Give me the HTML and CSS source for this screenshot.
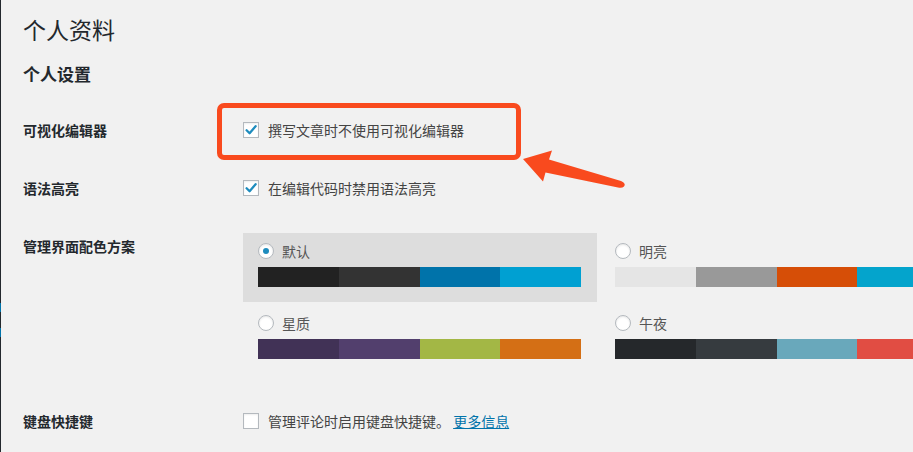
FILE: index.html
```html
<!DOCTYPE html>
<html lang="zh-CN">
<head>
<meta charset="utf-8">
<title>个人资料</title>
<link rel="stylesheet" href="styles.css">
</head>
<body>
<div class="page">
  <div class="sidebar-edge">
    <span class="edge-mark edge-a"></span>
    <span class="edge-mark edge-b"></span>
  </div>
  <div class="wrap">
    <h1 class="title">个人资料</h1>
    <h2 class="section">个人设置</h2>

    <div class="form">
      <div class="row row-1">
        <div class="th">可视化编辑器</div>
        <div class="td td-annotated">
          <label class="check-line">
            <span class="checkbox is-checked">
              <svg viewBox="0 0 16 16" width="16" height="16"><path d="M3.6 8.2 L6.6 11.2 L12.6 4.2" fill="none" stroke="#1e8cbe" stroke-width="2.3" stroke-linecap="round" stroke-linejoin="round"/></svg>
            </span>
            <span class="check-text">撰写文章时不使用可视化编辑器</span>
          </label>
          <div class="highlight-box"></div>
        </div>
      </div>

      <div class="row row-2">
        <div class="th">语法高亮</div>
        <div class="td">
          <label class="check-line">
            <span class="checkbox is-checked">
              <svg viewBox="0 0 16 16" width="16" height="16"><path d="M3.6 8.2 L6.6 11.2 L12.6 4.2" fill="none" stroke="#1e8cbe" stroke-width="2.3" stroke-linecap="round" stroke-linejoin="round"/></svg>
            </span>
            <span class="check-text">在编辑代码时禁用语法高亮</span>
          </label>
        </div>
      </div>

      <div class="row row-3">
        <div class="th">管理界面配色方案</div>
        <div class="td">
          <div class="schemes">
            <div class="scheme is-selected">
              <div class="scheme-head"><span class="radio is-on"></span><span class="scheme-name">默认</span></div>
              <div class="palette">
                <span style="background:#222222"></span>
                <span style="background:#333333"></span>
                <span style="background:#0073aa"></span>
                <span style="background:#00a0d2"></span>
              </div>
            </div>
            <div class="scheme">
              <div class="scheme-head"><span class="radio"></span><span class="scheme-name">明亮</span></div>
              <div class="palette">
                <span style="background:#e5e5e5"></span>
                <span style="background:#999999"></span>
                <span style="background:#d64e07"></span>
                <span style="background:#04a4cc"></span>
              </div>
            </div>
            <div class="scheme">
              <div class="scheme-head"><span class="radio"></span><span class="scheme-name">星质</span></div>
              <div class="palette">
                <span style="background:#413256"></span>
                <span style="background:#523f6d"></span>
                <span style="background:#a3b745"></span>
                <span style="background:#d46f15"></span>
              </div>
            </div>
            <div class="scheme">
              <div class="scheme-head"><span class="radio"></span><span class="scheme-name">午夜</span></div>
              <div class="palette">
                <span style="background:#25282b"></span>
                <span style="background:#363b3f"></span>
                <span style="background:#69a8bb"></span>
                <span style="background:#e14d43"></span>
              </div>
            </div>
          </div>
        </div>
      </div>

      <div class="row row-4">
        <div class="th">键盘快捷键</div>
        <div class="td">
          <label class="check-line">
            <span class="checkbox"></span>
            <span class="check-text">管理评论时启用键盘快捷键。 <a class="more" href="#">更多信息</a></span>
          </label>
        </div>
      </div>
    </div>
  </div>

  <svg class="arrow" width="913" height="452" viewBox="0 0 913 452">
    <path d="M523 159 L552 150.5 L549 159.5 L621 181 Q626.5 183.5 624 186.5 Q622 188.5 618 187.5 L545.5 172.5 L543 181.5 Z" fill="#f94a1e"/>
  </svg>
</div>
</body>
</html>
```

FILE: styles.css
```css
html, body {
  margin: 0;
  padding: 0;
  background: #f1f1f1;
  overflow: hidden;
}

body {
  font-family: "Noto Sans CJK SC", "Noto Sans", "Liberation Sans", sans-serif;
  color: #23282d;
  font-size: 14px;
  line-height: 20px;
}

.page {
  position: relative;
  width: 913px;
  height: 452px;
  display: flex;
}

.sidebar-edge {
  position: relative;
  width: 1px;
  flex: 0 0 1px;
  background: #23282d;
}

.edge-mark {
  position: absolute;
  left: 0;
  width: 1px;
  background: #0073aa;
}

.edge-a { top: 303px; height: 9px; }
.edge-b { top: 328px; height: 9px; }

.wrap {
  flex: 1;
  padding-left: 22px;
  min-width: 0;
}

.title {
  margin: 15px 0 0;
  font-size: 23px;
  line-height: 29px;
  font-weight: 400;
  color: #23282d;
}

.section {
  margin: 18px 0 0;
  font-size: 17px;
  line-height: 24px;
  font-weight: 600;
  color: #23282d;
}

.form {
  margin-top: 24px;
}

.row {
  display: grid;
  grid-template-columns: 210px 1fr;
}

.row-1, .row-2 {
  height: 58px;
}

.row-3 {
  height: 175px;
}

.th {
  padding-top: 10px;
  font-size: 14px;
  line-height: 20px;
  font-weight: 600;
  color: #23282d;
}

.td {
  padding-top: 10px;
  padding-left: 10px;
}

.row-3 .td {
  padding-top: 7px;
}

.td-annotated {
  position: relative;
}

.check-line {
  display: flex;
  align-items: center;
  height: 20px;
  color: #444;
}

.checkbox {
  box-sizing: border-box;
  width: 16px;
  height: 16px;
  flex: 0 0 16px;
  border: 1px solid #b4b9be;
  background: #fff;
  box-shadow: inset 0 1px 2px rgba(0, 0, 0, 0.07);
  margin-right: 9px;
  position: relative;
}

.checkbox svg {
  position: absolute;
  left: -1px;
  top: -1px;
}

.check-text {
  white-space: nowrap;
}

.more {
  color: #0073aa;
  text-decoration: underline;
}

.highlight-box {
  position: absolute;
  left: -16px;
  top: -7px;
  width: 304px;
  height: 57px;
  box-sizing: border-box;
  border: 5px solid #f94a1e;
  border-radius: 7px;
}

.schemes {
  display: grid;
  grid-template-columns: 354px 354px;
  column-gap: 3px;
  row-gap: 3px;
}

.scheme {
  box-sizing: border-box;
  padding: 5px 15px 15px;
  height: 69px;
}

.scheme.is-selected {
  background: #dddddd;
}

.scheme-head {
  display: flex;
  align-items: center;
  height: 26px;
  padding-bottom: 3px;
}

.radio {
  box-sizing: border-box;
  width: 16px;
  height: 16px;
  flex: 0 0 16px;
  border-radius: 50%;
  border: 1px solid #b4b9be;
  background: #fff;
  box-shadow: inset 0 1px 2px rgba(0, 0, 0, 0.1);
  margin-right: 8px;
  display: flex;
  align-items: center;
  justify-content: center;
}

.radio.is-on::after {
  content: "";
  width: 6px;
  height: 6px;
  border-radius: 50%;
  background: #1e8cbe;
}

.scheme-name {
  color: #555;
  font-size: 14px;
}

.palette {
  display: flex;
  width: 323px;
  height: 20px;
}

.palette span {
  flex: 1;
}

.arrow {
  position: absolute;
  left: 0;
  top: 0;
  pointer-events: none;
}
```
